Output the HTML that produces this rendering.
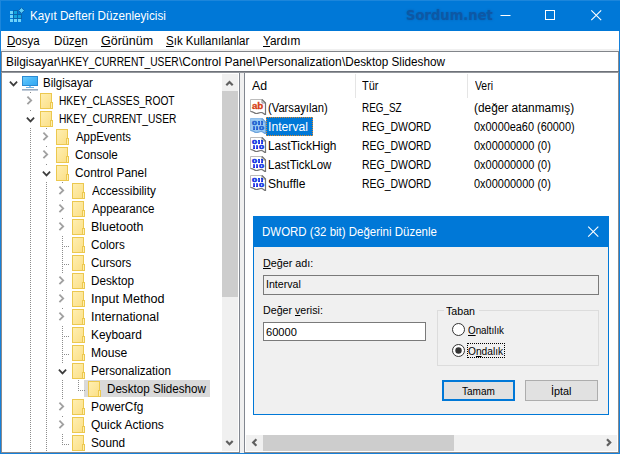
<!DOCTYPE html>
<html lang="tr">
<head>
<meta charset="utf-8">
<title>Kayıt Defteri Düzenleyicisi</title>
<style>
html,body{margin:0;padding:0;}
body{width:620px;height:454px;position:relative;overflow:hidden;background:#fff;font-family:"Liberation Sans",sans-serif;}
.a{position:absolute;}
.t{position:absolute;white-space:pre;line-height:normal;color:#000;transform-origin:0 0;}
.t u{text-decoration:underline;text-underline-offset:1px;}
svg{position:absolute;left:0;top:0;}
svg text.ls{font-family:"Liberation Sans",sans-serif;}
</style>
</head>
<body>
<!-- window frame -->
<div class="a" style="left:0;top:0;width:620px;height:31px;background:#0078d7;border-top:1px solid #1c86db;border-left:1px solid #1c86db;box-sizing:border-box"></div>
<div class="a" style="left:0;top:31px;width:1px;height:423px;background:#1580da"></div>
<div class="a" style="left:619px;top:31px;width:1px;height:423px;background:#1580da"></div>
<div class="a" style="left:0;top:453px;width:620px;height:1px;background:#1580da"></div>
<!-- menu bar bottom strip -->
<div class="a" style="left:1px;top:49px;width:618px;height:2px;background:#f0f0f0"></div>
<!-- address bar -->
<div class="a" style="left:1px;top:51px;width:618px;height:1px;background:#82858a"></div>
<div class="a" style="left:1px;top:51px;width:1px;height:402px;background:#8a8a8c"></div>
<div class="a" style="left:618px;top:51px;width:1px;height:402px;background:#8a8a8c"></div>
<div class="a" style="left:1px;top:71px;width:618px;height:1px;background:#6e7279"></div>
<div class="a" style="left:1px;top:72px;width:618px;height:1px;background:#94979c"></div>
<div class="a" style="left:1px;top:452px;width:618px;height:1px;background:#8a8a8c"></div>
<!-- splitter -->
<div class="a" style="left:239px;top:73px;width:6px;height:380px;background:#f0f0f0;border-left:1px solid #828790;border-right:1px solid #828790;box-sizing:border-box"></div>
<!-- tree scrollbar -->
<div class="a" style="left:222px;top:74px;width:16px;height:377px;background:#f0f0f0"></div>
<div class="a" style="left:222px;top:91px;width:16px;height:206px;background:#cdcdcd"></div>
<!-- list hscrollbar -->
<div class="a" style="left:246px;top:435px;width:371px;height:16px;background:#f0f0f0"></div>
<div class="a" style="left:263px;top:435px;width:191px;height:16px;background:#cdcdcd"></div>
<!-- list header separators -->
<div class="a" style="left:355px;top:74px;width:1px;height:24px;background:#e5e5e5"></div>
<div class="a" style="left:467px;top:74px;width:1px;height:24px;background:#e5e5e5"></div>
<!-- tree selection -->
<div class="a" style="left:84px;top:380px;width:126px;height:17px;background:#d9d9d9"></div>
<svg width="620" height="454" viewBox="0 0 620 454">
<defs><linearGradient id="fg" x1="0" y1="0" x2="1" y2="1"><stop offset="0" stop-color="#ffefb2"/><stop offset="1" stop-color="#fbdf86"/></linearGradient></defs>
<rect x="10" y="11" width="3" height="3" fill="#6fd3fa"/>
<rect x="10" y="15" width="3" height="3" fill="#6fd3fa"/>
<rect x="10" y="19" width="3" height="3" fill="#6fd3fa"/>
<rect x="13.5" y="10.5" width="4" height="4" fill="#12a3dd" stroke="#0b63ad" stroke-width="1"/>
<rect x="13.5" y="14.5" width="4" height="4" fill="#12a3dd" stroke="#0b63ad" stroke-width="1"/>
<rect x="14" y="19" width="3" height="3" fill="#6fd3fa"/>
<rect x="17.5" y="14.5" width="4" height="4" fill="#12a3dd" stroke="#0b63ad" stroke-width="1"/>
<rect x="18" y="19" width="3" height="3" fill="#6fd3fa"/>
<path d="M21.5 7.6 L24.4 10.5 L21.5 13.4 L18.6 10.5 Z" fill="#5ccdf8" stroke="#0b63ad" stroke-width="1"/>
<path d="M500.5 15.5 H510.5" stroke="#fff" stroke-width="1" fill="none"/>
<rect x="545.5" y="10.5" width="9" height="9" stroke="#fff" stroke-width="1" fill="none"/>
<path d="M591.3 10.3 L601.2 20.2 M601.2 10.3 L591.3 20.2" stroke="#fff" stroke-width="1.1" fill="none"/>
<path d="M30.5 92 V452" stroke="#8c8c8c" stroke-width="1" stroke-dasharray="1 1" fill="none" shape-rendering="crispEdges"/>
<path d="M46.5 128 V452" stroke="#8c8c8c" stroke-width="1" stroke-dasharray="1 1" fill="none" shape-rendering="crispEdges"/>
<path d="M62.5 182 V445" stroke="#8c8c8c" stroke-width="1" stroke-dasharray="1 1" fill="none" shape-rendering="crispEdges"/>
<path d="M78.5 380 V391" stroke="#8c8c8c" stroke-width="1" stroke-dasharray="1 1" fill="none" shape-rendering="crispEdges"/>
<path d="M9.9 81.6 L13.5 85.4 L17.1 81.6" stroke="#3c3c3c" stroke-width="1.7" fill="none"/>
<defs><linearGradient id="mon" x1="0" y1="0" x2="1" y2="1"><stop offset="0" stop-color="#74cffd"/><stop offset="0.45" stop-color="#4bb9f8"/><stop offset="1" stop-color="#32a7f1"/></linearGradient></defs>
<rect x="22.5" y="76.5" width="15" height="9" fill="url(#mon)" stroke="#2b8ad2" stroke-width="1"/>
<rect x="29" y="86" width="2" height="1" fill="#8cc3ea"/>
<rect x="26" y="87" width="8" height="1" fill="#6db1e2"/>
<rect x="22" y="89" width="16" height="1.6" fill="#98abc0"/>
<rect x="25.0" y="94" width="11" height="16" fill="#fff"/>
<path d="M27.4 96.6 L31.2 100.4 L27.4 104.2" stroke="#a0a0a0" stroke-width="1.8" fill="none"/>
<rect x="40.5" y="93.5" width="11" height="15" fill="url(#fg)" stroke="#ecc84f" stroke-width="1"/>
<rect x="50.5" y="102.5" width="2" height="6" fill="#ffefb0" stroke="#ecc84f" stroke-width="1"/>
<rect x="25.0" y="112" width="11" height="16" fill="#fff"/>
<path d="M26.9 117.6 L30.5 121.4 L34.1 117.6" stroke="#3c3c3c" stroke-width="1.7" fill="none"/>
<rect x="40.5" y="111.5" width="11" height="15" fill="url(#fg)" stroke="#ecc84f" stroke-width="1"/>
<rect x="50.5" y="120.5" width="2" height="6" fill="#ffefb0" stroke="#ecc84f" stroke-width="1"/>
<rect x="41.0" y="130" width="11" height="16" fill="#fff"/>
<path d="M43.4 132.6 L47.2 136.4 L43.4 140.2" stroke="#a0a0a0" stroke-width="1.8" fill="none"/>
<rect x="56.5" y="129.5" width="11" height="15" fill="url(#fg)" stroke="#ecc84f" stroke-width="1"/>
<rect x="66.5" y="138.5" width="2" height="6" fill="#ffefb0" stroke="#ecc84f" stroke-width="1"/>
<rect x="41.0" y="148" width="11" height="16" fill="#fff"/>
<path d="M43.4 150.6 L47.2 154.4 L43.4 158.2" stroke="#a0a0a0" stroke-width="1.8" fill="none"/>
<rect x="56.5" y="147.5" width="11" height="15" fill="url(#fg)" stroke="#ecc84f" stroke-width="1"/>
<rect x="66.5" y="156.5" width="2" height="6" fill="#ffefb0" stroke="#ecc84f" stroke-width="1"/>
<rect x="41.0" y="166" width="11" height="16" fill="#fff"/>
<path d="M42.9 171.6 L46.5 175.4 L50.1 171.6" stroke="#3c3c3c" stroke-width="1.7" fill="none"/>
<rect x="56.5" y="165.5" width="11" height="15" fill="url(#fg)" stroke="#ecc84f" stroke-width="1"/>
<rect x="66.5" y="174.5" width="2" height="6" fill="#ffefb0" stroke="#ecc84f" stroke-width="1"/>
<rect x="57.0" y="184" width="11" height="16" fill="#fff"/>
<path d="M59.4 186.6 L63.2 190.4 L59.4 194.2" stroke="#a0a0a0" stroke-width="1.8" fill="none"/>
<rect x="72.5" y="183.5" width="11" height="15" fill="url(#fg)" stroke="#ecc84f" stroke-width="1"/>
<rect x="82.5" y="192.5" width="2" height="6" fill="#ffefb0" stroke="#ecc84f" stroke-width="1"/>
<rect x="57.0" y="202" width="11" height="16" fill="#fff"/>
<path d="M59.4 204.6 L63.2 208.4 L59.4 212.2" stroke="#a0a0a0" stroke-width="1.8" fill="none"/>
<rect x="72.5" y="201.5" width="11" height="15" fill="url(#fg)" stroke="#ecc84f" stroke-width="1"/>
<rect x="82.5" y="210.5" width="2" height="6" fill="#ffefb0" stroke="#ecc84f" stroke-width="1"/>
<rect x="57.0" y="220" width="11" height="16" fill="#fff"/>
<path d="M59.4 222.6 L63.2 226.4 L59.4 230.2" stroke="#a0a0a0" stroke-width="1.8" fill="none"/>
<rect x="72.5" y="219.5" width="11" height="15" fill="url(#fg)" stroke="#ecc84f" stroke-width="1"/>
<rect x="82.5" y="228.5" width="2" height="6" fill="#ffefb0" stroke="#ecc84f" stroke-width="1"/>
<path d="M64 246.5 H69" stroke="#8c8c8c" stroke-width="1" stroke-dasharray="1 1" fill="none" shape-rendering="crispEdges"/>
<rect x="72.5" y="237.5" width="11" height="15" fill="url(#fg)" stroke="#ecc84f" stroke-width="1"/>
<rect x="82.5" y="246.5" width="2" height="6" fill="#ffefb0" stroke="#ecc84f" stroke-width="1"/>
<path d="M64 264.5 H69" stroke="#8c8c8c" stroke-width="1" stroke-dasharray="1 1" fill="none" shape-rendering="crispEdges"/>
<rect x="72.5" y="255.5" width="11" height="15" fill="url(#fg)" stroke="#ecc84f" stroke-width="1"/>
<rect x="82.5" y="264.5" width="2" height="6" fill="#ffefb0" stroke="#ecc84f" stroke-width="1"/>
<rect x="57.0" y="274" width="11" height="16" fill="#fff"/>
<path d="M59.4 276.6 L63.2 280.4 L59.4 284.2" stroke="#a0a0a0" stroke-width="1.8" fill="none"/>
<rect x="72.5" y="273.5" width="11" height="15" fill="url(#fg)" stroke="#ecc84f" stroke-width="1"/>
<rect x="82.5" y="282.5" width="2" height="6" fill="#ffefb0" stroke="#ecc84f" stroke-width="1"/>
<rect x="57.0" y="292" width="11" height="16" fill="#fff"/>
<path d="M59.4 294.6 L63.2 298.4 L59.4 302.2" stroke="#a0a0a0" stroke-width="1.8" fill="none"/>
<rect x="72.5" y="291.5" width="11" height="15" fill="url(#fg)" stroke="#ecc84f" stroke-width="1"/>
<rect x="82.5" y="300.5" width="2" height="6" fill="#ffefb0" stroke="#ecc84f" stroke-width="1"/>
<rect x="57.0" y="310" width="11" height="16" fill="#fff"/>
<path d="M59.4 312.6 L63.2 316.4 L59.4 320.2" stroke="#a0a0a0" stroke-width="1.8" fill="none"/>
<rect x="72.5" y="309.5" width="11" height="15" fill="url(#fg)" stroke="#ecc84f" stroke-width="1"/>
<rect x="82.5" y="318.5" width="2" height="6" fill="#ffefb0" stroke="#ecc84f" stroke-width="1"/>
<path d="M64 336.5 H69" stroke="#8c8c8c" stroke-width="1" stroke-dasharray="1 1" fill="none" shape-rendering="crispEdges"/>
<rect x="72.5" y="327.5" width="11" height="15" fill="url(#fg)" stroke="#ecc84f" stroke-width="1"/>
<rect x="82.5" y="336.5" width="2" height="6" fill="#ffefb0" stroke="#ecc84f" stroke-width="1"/>
<path d="M64 354.5 H69" stroke="#8c8c8c" stroke-width="1" stroke-dasharray="1 1" fill="none" shape-rendering="crispEdges"/>
<rect x="72.5" y="345.5" width="11" height="15" fill="url(#fg)" stroke="#ecc84f" stroke-width="1"/>
<rect x="82.5" y="354.5" width="2" height="6" fill="#ffefb0" stroke="#ecc84f" stroke-width="1"/>
<rect x="57.0" y="364" width="11" height="16" fill="#fff"/>
<path d="M58.9 369.6 L62.5 373.4 L66.1 369.6" stroke="#3c3c3c" stroke-width="1.7" fill="none"/>
<rect x="72.5" y="363.5" width="11" height="15" fill="url(#fg)" stroke="#ecc84f" stroke-width="1"/>
<rect x="82.5" y="372.5" width="2" height="6" fill="#ffefb0" stroke="#ecc84f" stroke-width="1"/>
<path d="M80 390.5 H85" stroke="#8c8c8c" stroke-width="1" stroke-dasharray="1 1" fill="none" shape-rendering="crispEdges"/>
<rect x="88.5" y="381.5" width="11" height="15" fill="url(#fg)" stroke="#ecc84f" stroke-width="1"/>
<rect x="98.5" y="390.5" width="2" height="6" fill="#ffefb0" stroke="#ecc84f" stroke-width="1"/>
<rect x="57.0" y="400" width="11" height="16" fill="#fff"/>
<path d="M59.4 402.6 L63.2 406.4 L59.4 410.2" stroke="#a0a0a0" stroke-width="1.8" fill="none"/>
<rect x="72.5" y="399.5" width="11" height="15" fill="url(#fg)" stroke="#ecc84f" stroke-width="1"/>
<rect x="82.5" y="408.5" width="2" height="6" fill="#ffefb0" stroke="#ecc84f" stroke-width="1"/>
<rect x="57.0" y="418" width="11" height="16" fill="#fff"/>
<path d="M59.4 420.6 L63.2 424.4 L59.4 428.2" stroke="#a0a0a0" stroke-width="1.8" fill="none"/>
<rect x="72.5" y="417.5" width="11" height="15" fill="url(#fg)" stroke="#ecc84f" stroke-width="1"/>
<rect x="82.5" y="426.5" width="2" height="6" fill="#ffefb0" stroke="#ecc84f" stroke-width="1"/>
<path d="M64 444.5 H69" stroke="#8c8c8c" stroke-width="1" stroke-dasharray="1 1" fill="none" shape-rendering="crispEdges"/>
<rect x="72.5" y="435.5" width="11" height="15" fill="url(#fg)" stroke="#ecc84f" stroke-width="1"/>
<rect x="82.5" y="444.5" width="2" height="6" fill="#ffefb0" stroke="#ecc84f" stroke-width="1"/>
</svg>
<!-- list selection -->
<div class="a" style="left:266px;top:117px;width:47px;height:19px;background:#0078d7;outline:1px dotted #e08a28;outline-offset:-1px"></div>
<!-- dialog -->
<div class="a" style="left:253px;top:216px;width:356px;height:199px;background:#f0f0f0;border:1px solid #0078d7;border-top:31px solid #0078d7;box-sizing:border-box"></div>
<div class="a" style="left:263px;top:275px;width:336px;height:20px;box-sizing:border-box;border:1px solid #7a7a7a;background:#f0f0f0"></div>
<div class="a" style="left:263px;top:322px;width:163px;height:19px;box-sizing:border-box;border:1px solid #7a7a7a;background:#fff"></div>
<div class="a" style="left:437px;top:310px;width:162px;height:56px;box-sizing:border-box;border:1px solid #dcdcdc"></div>
<div class="a" style="left:444px;top:304px;width:35px;height:14px;background:#f0f0f0"></div>
<div class="a" style="left:442px;top:380px;width:73px;height:21px;box-sizing:border-box;border:2px solid #0078d7;background:#e1e1e1"></div>
<div class="a" style="left:525px;top:380px;width:73px;height:21px;box-sizing:border-box;border:1px solid #adadad;background:#e1e1e1"></div>
<div class="a" style="left:467px;top:343px;width:38px;height:15px;box-sizing:border-box;border:1px dotted #000"></div>
<svg width="620" height="454" viewBox="0 0 620 454">
<path d="M226.3 85.2 L229.5 82 L232.7 85.2" stroke="#606060" stroke-width="2.2" fill="none" stroke-linejoin="miter"/>
<path d="M226.3 441 L229.5 444.2 L232.7 441" stroke="#606060" stroke-width="2.2" fill="none" stroke-linejoin="miter"/>
<path d="M256.4 439.3 L253.2 442.5 L256.4 445.7" stroke="#606060" stroke-width="2.2" fill="none" stroke-linejoin="miter"/>
<path d="M607 439.3 L610.2 442.5 L607 445.7" stroke="#606060" stroke-width="2.2" fill="none" stroke-linejoin="miter"/>
<path d="M250.5 99.5 H262 L265.5 103 V114.5 C264 114.5 263.5 112.5 261 112.5 C259 112.5 258.5 113.5 256.5 113.5 C254 113.5 253.5 111.5 250.5 111.5 Z" fill="#fff" stroke="#bcbcbc" stroke-width="1"/><path d="M262 99.5 L265.5 103 V114.5 C264 114.5 263.5 112.5 261 112.5 C259 112.5 258.5 113.5 256.5 113.5 C254 113.5 253.5 111.5 250.5 111.5" fill="none" stroke="#757575" stroke-width="1.2"/><path d="M262 99.5 V103 H265.5" fill="none" stroke="#757575" stroke-width="0.8"/>
<text x="251.9" y="109.1" class="ls" font-weight="bold" font-size="9.6" fill="#d53c14" stroke="#d53c14" stroke-width="0.3" textLength="11.4" lengthAdjust="spacingAndGlyphs">ab</text>
<path d="M250.5 118.5 H262 L265.5 122 V133.5 C264 133.5 263.5 131.5 261 131.5 C259 131.5 258.5 132.5 256.5 132.5 C254 132.5 253.5 130.5 250.5 130.5 Z" fill="#9ccaf2" stroke="#8fbfec" stroke-width="1"/><path d="M262 118.5 L265.5 122 V133.5 C264 133.5 263.5 131.5 261 131.5 C259 131.5 258.5 132.5 256.5 132.5 C254 132.5 253.5 130.5 250.5 130.5" fill="none" stroke="#6ea4dc" stroke-width="1.2"/><path d="M262 118.5 V122 H265.5" fill="none" stroke="#6ea4dc" stroke-width="0.8"/>
<text class="ls" transform="translate(251.93 125.1) scale(1.623 1)" font-weight="bold" font-size="5.7" fill="#1b60d0" stroke="#1b60d0" stroke-width="0.4">0</text><svg x="258" y="121.00" width="2" height="4.1" style="position:static;overflow:hidden"><text class="ls" transform="translate(-2.96 4.1) scale(2.302 1)" font-weight="bold" font-size="5.7" fill="#1b60d0">1</text></svg><svg x="261" y="121.00" width="2" height="4.1" style="position:static;overflow:hidden"><text class="ls" transform="translate(-2.96 4.1) scale(2.302 1)" font-weight="bold" font-size="5.7" fill="#1b60d0">1</text></svg>
<svg x="253" y="126.20" width="2" height="4.1" style="position:static;overflow:hidden"><text class="ls" transform="translate(-2.96 4.1) scale(2.302 1)" font-weight="bold" font-size="5.7" fill="#1b60d0">1</text></svg><svg x="256" y="126.20" width="2" height="4.1" style="position:static;overflow:hidden"><text class="ls" transform="translate(-2.96 4.1) scale(2.302 1)" font-weight="bold" font-size="5.7" fill="#1b60d0">1</text></svg><text class="ls" transform="translate(259.03 130.3) scale(1.623 1)" font-weight="bold" font-size="5.7" fill="#1b60d0" stroke="#1b60d0" stroke-width="0.4">0</text>
<path d="M250.5 137.5 H262 L265.5 141 V152.5 C264 152.5 263.5 150.5 261 150.5 C259 150.5 258.5 151.5 256.5 151.5 C254 151.5 253.5 149.5 250.5 149.5 Z" fill="#fff" stroke="#bcbcbc" stroke-width="1"/><path d="M262 137.5 L265.5 141 V152.5 C264 152.5 263.5 150.5 261 150.5 C259 150.5 258.5 151.5 256.5 151.5 C254 151.5 253.5 149.5 250.5 149.5" fill="none" stroke="#757575" stroke-width="1.2"/><path d="M262 137.5 V141 H265.5" fill="none" stroke="#757575" stroke-width="0.8"/>
<text class="ls" transform="translate(251.93 144.1) scale(1.623 1)" font-weight="bold" font-size="5.7" fill="#0f30e2" stroke="#0f30e2" stroke-width="0.4">0</text><svg x="258" y="140.00" width="2" height="4.1" style="position:static;overflow:hidden"><text class="ls" transform="translate(-2.96 4.1) scale(2.302 1)" font-weight="bold" font-size="5.7" fill="#0f30e2">1</text></svg><svg x="261" y="140.00" width="2" height="4.1" style="position:static;overflow:hidden"><text class="ls" transform="translate(-2.96 4.1) scale(2.302 1)" font-weight="bold" font-size="5.7" fill="#0f30e2">1</text></svg>
<svg x="253" y="145.20" width="2" height="4.1" style="position:static;overflow:hidden"><text class="ls" transform="translate(-2.96 4.1) scale(2.302 1)" font-weight="bold" font-size="5.7" fill="#0f30e2">1</text></svg><svg x="256" y="145.20" width="2" height="4.1" style="position:static;overflow:hidden"><text class="ls" transform="translate(-2.96 4.1) scale(2.302 1)" font-weight="bold" font-size="5.7" fill="#0f30e2">1</text></svg><text class="ls" transform="translate(259.03 149.3) scale(1.623 1)" font-weight="bold" font-size="5.7" fill="#0f30e2" stroke="#0f30e2" stroke-width="0.4">0</text>
<path d="M250.5 156.5 H262 L265.5 160 V171.5 C264 171.5 263.5 169.5 261 169.5 C259 169.5 258.5 170.5 256.5 170.5 C254 170.5 253.5 168.5 250.5 168.5 Z" fill="#fff" stroke="#bcbcbc" stroke-width="1"/><path d="M262 156.5 L265.5 160 V171.5 C264 171.5 263.5 169.5 261 169.5 C259 169.5 258.5 170.5 256.5 170.5 C254 170.5 253.5 168.5 250.5 168.5" fill="none" stroke="#757575" stroke-width="1.2"/><path d="M262 156.5 V160 H265.5" fill="none" stroke="#757575" stroke-width="0.8"/>
<text class="ls" transform="translate(251.93 163.1) scale(1.623 1)" font-weight="bold" font-size="5.7" fill="#0f30e2" stroke="#0f30e2" stroke-width="0.4">0</text><svg x="258" y="159.00" width="2" height="4.1" style="position:static;overflow:hidden"><text class="ls" transform="translate(-2.96 4.1) scale(2.302 1)" font-weight="bold" font-size="5.7" fill="#0f30e2">1</text></svg><svg x="261" y="159.00" width="2" height="4.1" style="position:static;overflow:hidden"><text class="ls" transform="translate(-2.96 4.1) scale(2.302 1)" font-weight="bold" font-size="5.7" fill="#0f30e2">1</text></svg>
<svg x="253" y="164.20" width="2" height="4.1" style="position:static;overflow:hidden"><text class="ls" transform="translate(-2.96 4.1) scale(2.302 1)" font-weight="bold" font-size="5.7" fill="#0f30e2">1</text></svg><svg x="256" y="164.20" width="2" height="4.1" style="position:static;overflow:hidden"><text class="ls" transform="translate(-2.96 4.1) scale(2.302 1)" font-weight="bold" font-size="5.7" fill="#0f30e2">1</text></svg><text class="ls" transform="translate(259.03 168.3) scale(1.623 1)" font-weight="bold" font-size="5.7" fill="#0f30e2" stroke="#0f30e2" stroke-width="0.4">0</text>
<path d="M250.5 175.5 H262 L265.5 179 V190.5 C264 190.5 263.5 188.5 261 188.5 C259 188.5 258.5 189.5 256.5 189.5 C254 189.5 253.5 187.5 250.5 187.5 Z" fill="#fff" stroke="#bcbcbc" stroke-width="1"/><path d="M262 175.5 L265.5 179 V190.5 C264 190.5 263.5 188.5 261 188.5 C259 188.5 258.5 189.5 256.5 189.5 C254 189.5 253.5 187.5 250.5 187.5" fill="none" stroke="#757575" stroke-width="1.2"/><path d="M262 175.5 V179 H265.5" fill="none" stroke="#757575" stroke-width="0.8"/>
<text class="ls" transform="translate(251.93 182.1) scale(1.623 1)" font-weight="bold" font-size="5.7" fill="#0f30e2" stroke="#0f30e2" stroke-width="0.4">0</text><svg x="258" y="178.00" width="2" height="4.1" style="position:static;overflow:hidden"><text class="ls" transform="translate(-2.96 4.1) scale(2.302 1)" font-weight="bold" font-size="5.7" fill="#0f30e2">1</text></svg><svg x="261" y="178.00" width="2" height="4.1" style="position:static;overflow:hidden"><text class="ls" transform="translate(-2.96 4.1) scale(2.302 1)" font-weight="bold" font-size="5.7" fill="#0f30e2">1</text></svg>
<svg x="253" y="183.20" width="2" height="4.1" style="position:static;overflow:hidden"><text class="ls" transform="translate(-2.96 4.1) scale(2.302 1)" font-weight="bold" font-size="5.7" fill="#0f30e2">1</text></svg><svg x="256" y="183.20" width="2" height="4.1" style="position:static;overflow:hidden"><text class="ls" transform="translate(-2.96 4.1) scale(2.302 1)" font-weight="bold" font-size="5.7" fill="#0f30e2">1</text></svg><text class="ls" transform="translate(259.03 187.3) scale(1.623 1)" font-weight="bold" font-size="5.7" fill="#0f30e2" stroke="#0f30e2" stroke-width="0.4">0</text>
<path d="M588.2 226.6 L598.3 236.7 M598.3 226.6 L588.2 236.7" stroke="#fff" stroke-width="1.1" fill="none"/>
<circle cx="458.5" cy="329.5" r="6" fill="#fff" stroke="#333" stroke-width="1"/>
<circle cx="458.5" cy="350.5" r="6" fill="#fff" stroke="#333" stroke-width="1"/>
<circle cx="458.5" cy="350.5" r="3.2" fill="#333"/>
</svg>
<span class="t" style="left:29.83px;top:9.1px;font-size:12px;transform:scaleX(0.9747);color:#fff;">Kayıt Defteri Düzenleyicisi</span>
<span class="t" style="left:7.14px;top:34.4px;font-size:12px;transform:scaleX(0.9588);"><u>D</u>osya</span>
<span class="t" style="left:53.63px;top:34.4px;font-size:12px;transform:scaleX(0.9685);">Düz<u>e</u>n</span>
<span class="t" style="left:100.65px;top:34.4px;font-size:12px;transform:scaleX(1.0406);"><u>G</u>örünüm</span>
<span class="t" style="left:165.76px;top:34.4px;font-size:12px;transform:scaleX(0.9609);"><u>S</u>ık Kullanılanlar</span>
<span class="t" style="left:262.69px;top:34.4px;font-size:12px;transform:scaleX(0.9850);"><u>Y</u>ardım</span>
<span class="t" style="left:6.31px;top:54.6px;font-size:12px;transform:scaleX(0.9920);">Bilgisayar\</span>
<span class="t" style="left:61.35px;top:54.6px;font-size:12px;transform:scaleX(0.8524);">HKEY_CURRENT_USER</span>
<span class="t" style="left:179.40px;top:54.6px;font-size:12px;transform:scaleX(1.0025);">\Control Panel</span>
<span class="t" style="left:255.80px;top:54.6px;font-size:12px;transform:scaleX(1.0025);">\Personalization</span>
<span class="t" style="left:341.60px;top:54.6px;font-size:12px;transform:scaleX(0.9763);">\Desktop Slideshow</span>
<span class="t" style="left:43.04px;top:75.6px;font-size:12px;transform:scaleX(0.9600);">Bilgisayar</span>
<span class="t" style="left:59.15px;top:93.6px;font-size:12px;transform:scaleX(0.8493);">HKEY_CLASSES_ROOT</span>
<span class="t" style="left:59.15px;top:111.6px;font-size:12px;transform:scaleX(0.8502);">HKEY_CURRENT_USER</span>
<span class="t" style="left:75.94px;top:129.6px;font-size:12px;transform:scaleX(0.9485);">AppEvents</span>
<span class="t" style="left:75.39px;top:147.6px;font-size:12px;transform:scaleX(0.9712);">Console</span>
<span class="t" style="left:75.38px;top:165.6px;font-size:12px;transform:scaleX(0.9877);">Control Panel</span>
<span class="t" style="left:91.94px;top:183.6px;font-size:12px;transform:scaleX(0.9768);">Accessibility</span>
<span class="t" style="left:91.94px;top:201.6px;font-size:12px;transform:scaleX(0.9644);">Appearance</span>
<span class="t" style="left:90.97px;top:219.6px;font-size:12px;transform:scaleX(1.0340);">Bluetooth</span>
<span class="t" style="left:91.39px;top:237.6px;font-size:12px;transform:scaleX(0.9737);">Colors</span>
<span class="t" style="left:91.40px;top:255.6px;font-size:12px;transform:scaleX(0.9585);">Cursors</span>
<span class="t" style="left:91.02px;top:273.6px;font-size:12px;transform:scaleX(0.9750);">Desktop</span>
<span class="t" style="left:91.12px;top:291.6px;font-size:12px;transform:scaleX(1.0495);">Input Method</span>
<span class="t" style="left:91.14px;top:309.6px;font-size:12px;transform:scaleX(1.0282);">International</span>
<span class="t" style="left:91.01px;top:327.6px;font-size:12px;transform:scaleX(0.9874);">Keyboard</span>
<span class="t" style="left:90.99px;top:345.6px;font-size:12px;transform:scaleX(1.0087);">Mouse</span>
<span class="t" style="left:91.03px;top:363.6px;font-size:12px;transform:scaleX(0.9742);">Personalization</span>
<span class="t" style="left:107.03px;top:381.6px;font-size:12px;transform:scaleX(0.9695);">Desktop Slideshow</span>
<span class="t" style="left:91.01px;top:399.6px;font-size:12px;transform:scaleX(0.9934);">PowerCfg</span>
<span class="t" style="left:91.44px;top:417.6px;font-size:12px;transform:scaleX(1.0017);">Quick Actions</span>
<span class="t" style="left:91.45px;top:435.6px;font-size:12px;transform:scaleX(0.9828);">Sound</span>
<span class="t" style="left:252.34px;top:78.8px;font-size:12px;transform:scaleX(1.0281);">Ad</span>
<span class="t" style="left:362.47px;top:78.8px;font-size:12px;transform:scaleX(0.9167);">Tür</span>
<span class="t" style="left:474.75px;top:78.8px;font-size:12px;transform:scaleX(0.8683);">Veri</span>
<span class="t" style="left:268.10px;top:100.5px;font-size:12px;transform:scaleX(0.9344);">(Varsayılan)</span>
<span class="t" style="left:361.88px;top:100.5px;font-size:12px;transform:scaleX(0.8236);">REG_SZ</span>
<span class="t" style="left:474.06px;top:100.5px;font-size:12px;transform:scaleX(0.9886);">(değer atanmamış)</span>
<span class="t" style="left:267.96px;top:119.5px;font-size:12px;transform:scaleX(1.0177);color:#fff;">Interval</span>
<span class="t" style="left:361.83px;top:119.5px;font-size:12px;transform:scaleX(0.8720);">REG_DWORD</span>
<span class="t" style="left:474.35px;top:119.5px;font-size:12px;transform:scaleX(0.9080);">0x0000ea60 (60000)</span>
<span class="t" style="left:267.81px;top:138.5px;font-size:12px;transform:scaleX(0.9922);">LastTickHigh</span>
<span class="t" style="left:361.83px;top:138.5px;font-size:12px;transform:scaleX(0.8720);">REG_DWORD</span>
<span class="t" style="left:474.34px;top:138.5px;font-size:12px;transform:scaleX(0.9139);">0x00000000 (0)</span>
<span class="t" style="left:267.84px;top:157.5px;font-size:12px;transform:scaleX(0.9567);">LastTickLow</span>
<span class="t" style="left:361.83px;top:157.5px;font-size:12px;transform:scaleX(0.8720);">REG_DWORD</span>
<span class="t" style="left:474.34px;top:157.5px;font-size:12px;transform:scaleX(0.9139);">0x00000000 (0)</span>
<span class="t" style="left:268.23px;top:176.5px;font-size:12px;transform:scaleX(1.0069);">Shuffle</span>
<span class="t" style="left:361.83px;top:176.5px;font-size:12px;transform:scaleX(0.8720);">REG_DWORD</span>
<span class="t" style="left:474.34px;top:176.5px;font-size:12px;transform:scaleX(0.9139);">0x00000000 (0)</span>
<span class="t" style="left:405.94px;top:7.3px;font-size:13.6px;transform:scaleX(0.9648);color:#0d58a5;font-weight:bold;font-family:'DejaVu Sans',sans-serif;text-shadow:0 0 2px rgba(10,75,145,.5);">Sordum.net</span>
<span class="t" style="left:262.14px;top:224.7px;font-size:12px;transform:scaleX(0.9571);color:#fff;">DWORD (32 bit) Değerini Düzenle</span>
<span class="t" style="left:262.54px;top:256.8px;font-size:11px;transform:scaleX(0.9786);"><u>D</u>eğer adı:</span>
<span class="t" style="left:266.23px;top:278.4px;font-size:11px;transform:scaleX(0.9658);">Interval</span>
<span class="t" style="left:262.55px;top:304.1px;font-size:11px;transform:scaleX(0.9693);">Değer <u>v</u>erisi:</span>
<span class="t" style="left:265.53px;top:325.7px;font-size:11px;transform:scaleX(1.0093);">60000</span>
<span class="t" style="left:446.06px;top:305.4px;font-size:11px;transform:scaleX(0.9686);">Taban</span>
<span class="t" style="left:467.75px;top:323.8px;font-size:11px;transform:scaleX(0.8928);"><u>O</u>naltılık</span>
<span class="t" style="left:467.74px;top:344.5px;font-size:11px;transform:scaleX(0.9269);">O<u>n</u>dalık</span>
<span class="t" style="left:461.97px;top:384.7px;font-size:11px;transform:scaleX(0.9100);">Tamam</span>
<span class="t" style="left:551.02px;top:384.7px;font-size:11px;transform:scaleX(0.9810);">İptal</span>
</body>
</html>
